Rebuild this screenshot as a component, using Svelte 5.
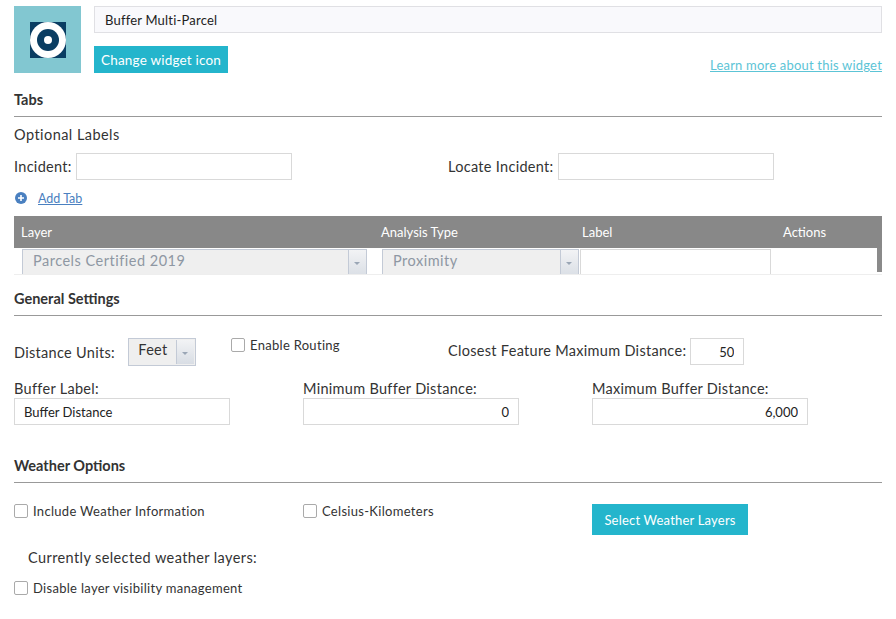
<script>
  const rowCols = [
    { label: 'Layer' },
    { label: 'Analysis Type' },
    { label: 'Label' },
    { label: 'Actions' }
  ];
</script>

<div class="page">
  <section class="top">
    <div class="icon-box">
      <svg width="36" height="36" viewBox="0 0 36 36" aria-hidden="true">
        <rect width="36" height="36" fill="#0a3d62" />
        <circle cx="18" cy="18" r="18" fill="#fff" />
        <circle cx="18" cy="18" r="11" fill="#0a3d62" />
        <circle cx="18" cy="18" r="4" fill="#fff" />
      </svg>
    </div>
    <div class="top-main">
      <input class="name" value="Buffer Multi-Parcel" />
      <div class="top-row">
        <button class="btn change">Change widget icon</button>
        <span class="learn">Learn more about this widget</span>
      </div>
    </div>
  </section>

  <h2 class="tabs-head">Tabs</h2>
  <p class="opt">Optional Labels</p>
  <div class="labels">
    <label class="pair"><span>Incident:</span><input class="tab-input" /></label>
    <label class="pair"><span>Locate Incident:</span><input class="tab-input" /></label>
  </div>
  <div class="add">
    <svg width="12" height="12" viewBox="0 0 12 12" aria-hidden="true">
      <circle cx="6" cy="6" r="6" fill="#4a80c0" />
      <path d="M6 3v6M3 6h6" stroke="#fff" stroke-width="1.6" />
    </svg>
    <span class="add-link">Add Tab</span>
  </div>

  <div class="table">
    <div class="thead">
      {#each rowCols as c}
        <div class="th">{c.label}</div>
      {/each}
    </div>
    <div class="tbody">
      <div class="cell">
        <div class="sel wide">
          <span class="sel-text">Parcels Certified 2019</span>
          <span class="sel-arrow"><i></i></span>
        </div>
      </div>
      <div class="cell">
        <div class="sel narrow">
          <span class="sel-text">Proximity</span>
          <span class="sel-arrow"><i></i></span>
        </div>
      </div>
      <div class="cell"><div class="label-input"></div></div>
      <div class="cell"></div>
      <div class="scroll"></div>
    </div>
  </div>

  <h2 class="general-head">General Settings</h2>
  <div class="general-row">
    <div class="units">
      <span>Distance Units:</span>
      <div class="unit-sel">
        <span class="unit-text">Feet</span>
        <span class="unit-arrow"><i></i></span>
      </div>
    </div>
    <label class="check routing"><span class="box"></span><span>Enable Routing</span></label>
    <label class="pair closest"><span>Closest Feature Maximum Distance:</span><input class="small-input" value="50" /></label>
  </div>
  <div class="buffer-row">
    <label class="stack"><span>Buffer Label:</span><input class="buf left" value="Buffer Distance" /></label>
    <label class="stack"><span>Minimum Buffer Distance:</span><input class="buf" value="0" /></label>
    <label class="stack"><span>Maximum Buffer Distance:</span><input class="buf" value="6,000" /></label>
  </div>

  <h2 class="weather-head">Weather Options</h2>
  <div class="weather-row">
    <label class="check"><span class="box"></span><span>Include Weather Information</span></label>
    <label class="check"><span class="box"></span><span>Celsius-Kilometers</span></label>
    <button class="btn layers">Select Weather Layers</button>
  </div>
  <p class="current">Currently selected weather layers:</p>
  <label class="check disable"><span class="box"></span><span>Disable layer visibility management</span></label>
</div>

<style>
  :global(body) {
    margin: 0;
    background: #fff;
  }
  .page {
    box-sizing: border-box;
    width: 896px;
    height: 619px;
    padding: 6px 14px 0;
    overflow: hidden;
    font-family: Lato, "Open Sans", sans-serif;
    font-size: 14.5px;
    color: #333;
  }
  input {
    box-sizing: border-box;
    font: inherit;
    color: #222;
    border: 1px solid #d9d9d9;
    background: #fff;
    outline: none;
    margin: 0;
  }
  .top {
    display: flex;
    gap: 13px;
    width: 868px;
  }
  .icon-box {
    width: 67px;
    height: 67px;
    background: #82c7d1;
    display: flex;
    align-items: center;
    justify-content: center;
    flex: none;
  }
  .icon-box svg { display: block; }
  .top-main { flex: 1; }
  .name {
    display: block;
    width: 100%;
    height: 27px;
    padding: 0 10px;
    background: #f9f9fc;
    border-color: #e0e0e4;
    font-size: 13px;
    letter-spacing: 0.2px;
  }
  .top-row {
    display: flex;
    justify-content: space-between;
    align-items: flex-end;
    margin-top: 13px;
  }
  .btn {
    border: 0;
    background: #24b5cc;
    color: #fff;
    font: inherit;
    padding: 0;
  }
  .change {
    width: 134px;
    height: 27px;
    font-size: 13.5px;
    letter-spacing: 0.2px;
  }
  .learn {
    color: #5cc4d6;
    font-size: 13px;
    text-decoration: underline;
    letter-spacing: 0.2px;
    line-height: 16px;
  }
  h2 {
    margin: 0;
    font-size: 14.5px;
    font-weight: 700;
    color: #333;
    line-height: 18px;
    border-bottom: 1px solid #999;
    padding-bottom: 7px;
  }
  .tabs-head { margin-top: 18px; }
  .opt {
    margin: 9px 0 0;
    line-height: 18px;
    letter-spacing: 0.45px;
  }
  .labels {
    display: grid;
    grid-template-columns: 434px 1fr;
    margin-top: 9px;
  }
  .pair {
    display: flex;
    align-items: center;
    gap: 4px;
    letter-spacing: 0.3px;
  }
  .tab-input {
    width: 216px;
    height: 27px;
  }
  .add {
    display: flex;
    align-items: center;
    gap: 11px;
    margin: 10px 0 0 1px;
    height: 16px;
  }
  .add-link {
    color: #4a80c0;
    font-size: 12.5px;
    text-decoration: underline;
  }
  .table { margin-top: 10px; }
  .thead {
    height: 32px;
    background: #888;
    display: grid;
    grid-template-columns: 360px 201px 201px 106px;
    align-items: center;
    color: #fff;
    font-size: 13px;
  }
  .th { padding-left: 7px; }
  .tbody {
    position: relative;
    height: 27px;
    overflow: hidden;
    display: grid;
    grid-template-columns: 360px 205px 196px 107px;
    border-bottom: 1px solid #eee;
    box-sizing: border-box;
  }
  .cell { padding-top: 1px; }
  .sel {
    box-sizing: border-box;
    height: 30px;
    display: flex;
    background: #efefef;
    border: 1px solid #c3cad6;
    color: #8e97a3;
    font-size: 14.5px;
    letter-spacing: 0.5px;
  }
  .wide { width: 345px; margin-left: 8px; }
  .narrow { width: 197px; margin-left: 8px; }
  .sel-text {
    flex: 1;
    padding-left: 10px;
    line-height: 22px;
  }
  .sel-arrow {
    width: 17px;
    border-left: 1px solid #c3cad6;
    background: linear-gradient(#f2f3f5, #d8dde4);
    position: relative;
  }
  .sel-arrow i, .unit-arrow i {
    position: absolute;
    left: 5px;
    top: 12px;
    border: 3px solid transparent;
    border-top: 3px solid #9aa6b5;
    border-bottom: 0;
  }
  .label-input {
    box-sizing: border-box;
    width: 191px;
    height: 30px;
    margin-left: 1px;
    border: 1px solid #d9d9d9;
  }
  .scroll {
    position: absolute;
    right: 0;
    top: 0;
    width: 5px;
    height: 24px;
    background: #8a8a8a;
  }
  .general-head { margin-top: 15px; }
  .general-row {
    display: grid;
    grid-template-columns: 217px 217px 1fr;
    margin-top: 22px;
    height: 28px;
  }
  .units {
    display: flex;
    align-items: center;
    gap: 13px;
    letter-spacing: 0.3px;
  }
  .unit-sel {
    box-sizing: border-box;
    width: 68px;
    height: 28px;
    display: flex;
    background: #efefef;
    border: 1px solid #c3cad6;
  }
  .unit-text {
    flex: 1;
    text-align: center;
    line-height: 22px;
    padding-left: 1px;
  }
  .unit-arrow {
    width: 17px;
    border-left: 1px solid #c3cad6;
    margin: 1px 1px 1px 0;
    background: linear-gradient(#f2f3f5, #d8dde4);
    position: relative;
  }
  .check {
    display: flex;
    align-items: center;
    gap: 5px;
    font-size: 13px;
    letter-spacing: 0.3px;
    height: 14px;
  }
  .box {
    box-sizing: border-box;
    width: 14px;
    height: 14px;
    border: 1px solid #aaa;
    border-radius: 2px;
    background: #fff;
    flex: none;
  }
  .closest { align-items: flex-start; }
  .closest span { line-height: 26px; }
  .small-input {
    width: 54px;
    height: 27px;
    text-align: right;
    padding-right: 9px;
    font-size: 13px;
  }
  .buffer-row {
    display: grid;
    grid-template-columns: 289px 289px 1fr;
    margin-top: 14px;
  }
  .stack {
    display: flex;
    flex-direction: column;
    letter-spacing: 0.3px;
    line-height: 18px;
  }
  .buf {
    width: 216px;
    height: 27px;
    margin-top: 0;
    text-align: right;
    padding: 0 9px;
    font-size: 13px;
  }
  .buf.left { text-align: left; }
  .weather-head { margin-top: 32px; }
  .weather-row {
    display: grid;
    grid-template-columns: 289px 289px 1fr;
    margin-top: 21px;
    height: 31px;
  }
  .layers {
    width: 156px;
    height: 31px;
    font-size: 13px;
    letter-spacing: 0.2px;
  }
  .current {
    margin: 14px 0 0 14px;
    line-height: 18px;
    letter-spacing: 0.4px;
  }
  .disable { margin-top: 14px; }
</style>
